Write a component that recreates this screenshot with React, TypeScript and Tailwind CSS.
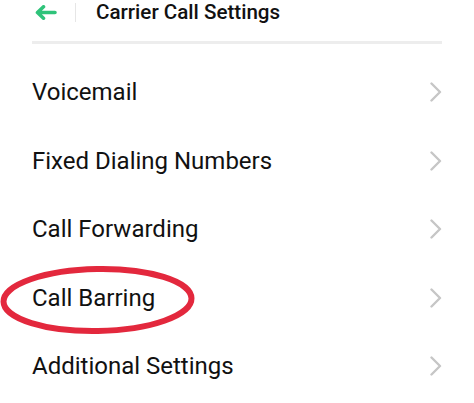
import React from "react";

const items = ["Voicemail", "Fixed Dialing Numbers", "Call Forwarding", "Call Barring", "Additional Settings"];

function Chevron() {
  return (
    <svg width="12" height="20" viewBox="0 0 12 20" fill="none">
      <path d="M1.5 1.5 L10 10 L1.5 18.5" stroke="#c6c6c6" strokeWidth="2.4" strokeLinecap="round" strokeLinejoin="round" />
    </svg>
  );
}

export default function App() {
  return (
    <div className="relative w-[474px] h-[403px] bg-white overflow-hidden text-[#111]" style={{ fontFamily: "Roboto, 'Noto Sans', sans-serif" }}>
      <div className="px-[32px]">
        <div className="flex items-center h-[24px]">
          <svg width="22" height="15" viewBox="0 0 22 15" className="ml-[3px]" fill="none">
            <path d="M20 7.5 H2.5 M8.5 1.8 L2.5 7.5 L8.5 13.2" stroke="#2fc37a" strokeWidth="3.6" strokeLinecap="round" strokeLinejoin="round" />
          </svg>
          <div className="ml-[18px] w-px h-[19px] bg-[#e6e6e6]" />
          <div className="ml-[20px] text-[20.6px] font-medium">Carrier Call Settings</div>
        </div>
        <div className="mt-[17px] h-[3px] w-[410px] bg-[#ededed]" />
        <div className="mt-[14px] flex flex-col">
          {items.map((t) => (
            <div key={t} className="flex items-center justify-between h-[68.5px]">
              <span className="text-[24px]">{t}</span>
              <Chevron />
            </div>
          ))}
        </div>
      </div>
      <svg className="absolute left-0 top-[264px]" width="200" height="74" viewBox="0 0 200 74" fill="none">
        <ellipse cx="97.5" cy="36" rx="94" ry="31" stroke="#e3283d" strokeWidth="6" transform="rotate(-1 97.5 36)" />
      </svg>
    </div>
  );
}
